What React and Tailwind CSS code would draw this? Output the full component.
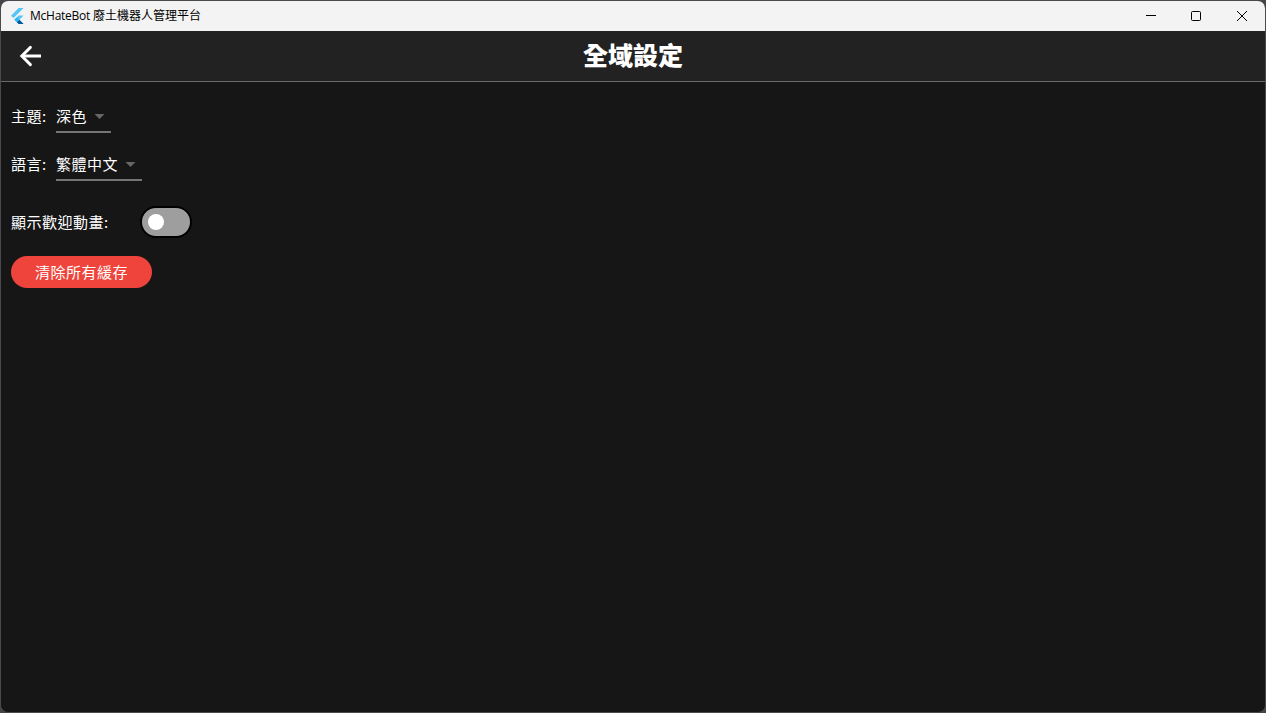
import React from "react";

function FlutterLogo() {
  return (
    <svg width="13" height="16" viewBox="0 0 13 16" className="shrink-0">
      <path d="M7.7 0H12.6L2.5 10.1L0 7.7Z" fill="#54c5f8" />
      <path d="M7.7 7.4H12.6L8.3 11.7L12.6 16H7.7L3.4 11.7Z" fill="#54c5f8" />
      <path d="M5.9 14.2L8.3 11.7L12.6 16H7.7Z" fill="#01579b" />
      <path d="M3.4 11.7L5.9 9.2L8.3 11.7L5.9 14.2Z" fill="#29b6f6" />
    </svg>
  );
}

function TitleBar() {
  return (
    <header className="flex h-[30px] shrink-0 items-center bg-[#f3f3f3] pl-[10px] text-black">
      <FlutterLogo />
      <span className="ml-[6px] flex-1 text-[12px] leading-[16px] whitespace-nowrap font-['Open_Sans','Noto_Sans_CJK_TC',sans-serif]">
        <span className="tracking-[-0.25px]">McHateBot </span>
        <span>廢土機器人管理平台</span>
      </span>
      <div className="flex h-full items-center">
        <button aria-label="Minimize" className="flex h-full w-[46px] items-center justify-center">
          <svg width="10" height="10" viewBox="0 0 10 10"><path d="M0 4.5H10" stroke="#000" /></svg>
        </button>
        <button aria-label="Maximize" className="flex h-full w-[45px] items-center justify-center">
          <svg width="11" height="10" viewBox="0 0 11 10"><rect x=".5" y=".5" width="9" height="9" rx="1" fill="none" stroke="#000" /></svg>
        </button>
        <button aria-label="Close" className="flex h-full w-[46px] items-center justify-center">
          <svg width="10" height="10" viewBox="0 0 10 10"><path d="M0 0L10 10M10 0L0 10" stroke="#000" /></svg>
        </button>
      </div>
    </header>
  );
}

function AppBar() {
  return (
    <div className="grid h-[51px] shrink-0 grid-cols-[60px_1fr_60px] items-center border-b border-[#6b6b6b] bg-[#222222]">
      <button aria-label="Back" className="flex pl-[18px]">
        <svg width="22" height="22" viewBox="0 0 22 22" fill="none" stroke="#fff" strokeWidth="2.9">
          <path d="M22 11H3.5" />
          <path d="M11.4 2.4L2.8 11L11.4 19.6" strokeLinecap="round" />
        </svg>
      </button>
      <h1 className="pb-[4px] text-center text-[25px] leading-[32px] font-black font-['Noto_Sans_CJK_TC',sans-serif]">全域設定</h1>
    </div>
  );
}

function Dropdown({ value }) {
  return (
    <button className="ml-[10px] flex h-[34px] items-center border-b-2 border-[#747474] pt-[2px]">
      <span>{value}</span>
      <svg width="11" height="5" viewBox="0 0 11 5" className="mr-[6px] ml-[7px]"><path d="M.5 0H10.5L5.5 5Z" fill="#666" /></svg>
    </button>
  );
}

function SelectRow({ label, value }) {
  return (
    <div className="flex h-[48px] items-center">
      <span className="w-[35px] whitespace-nowrap">{label}</span>
      <Dropdown value={value} />
    </div>
  );
}

export default function App() {
  return (
    <div className="h-[713px] w-[1266px] overflow-hidden bg-[#46454b]">
      <div className="flex h-[713px] w-[1266px] flex-col overflow-hidden rounded-[8px] border border-[#4a494d] bg-[#161616] text-white">
        <TitleBar />
        <AppBar />
        <main className="flex flex-col items-start pt-[10px] pl-[10px] text-[15px] leading-[20px] tracking-[0.5px] font-['Noto_Sans_CJK_TC',sans-serif]">
          <SelectRow label="主題:" value="深色" />
          <SelectRow label="語言:" value="繁體中文" />
          <div className="mt-[18px] flex h-[32px] items-center">
            <span className="w-[129px] whitespace-nowrap">顯示歡迎動畫:</span>
            <button role="switch" aria-checked="false" aria-label="顯示歡迎動畫" className="flex h-[32px] w-[52px] items-center rounded-full border-2 border-black bg-[#9e9e9e] pl-[6px]">
              <span className="size-[16px] rounded-full bg-white" />
            </button>
          </div>
          <button className="mt-[18px] flex h-[32px] w-[141px] items-center justify-center rounded-full bg-[#ef443b] whitespace-nowrap">清除所有緩存</button>
        </main>
      </div>
    </div>
  );
}
